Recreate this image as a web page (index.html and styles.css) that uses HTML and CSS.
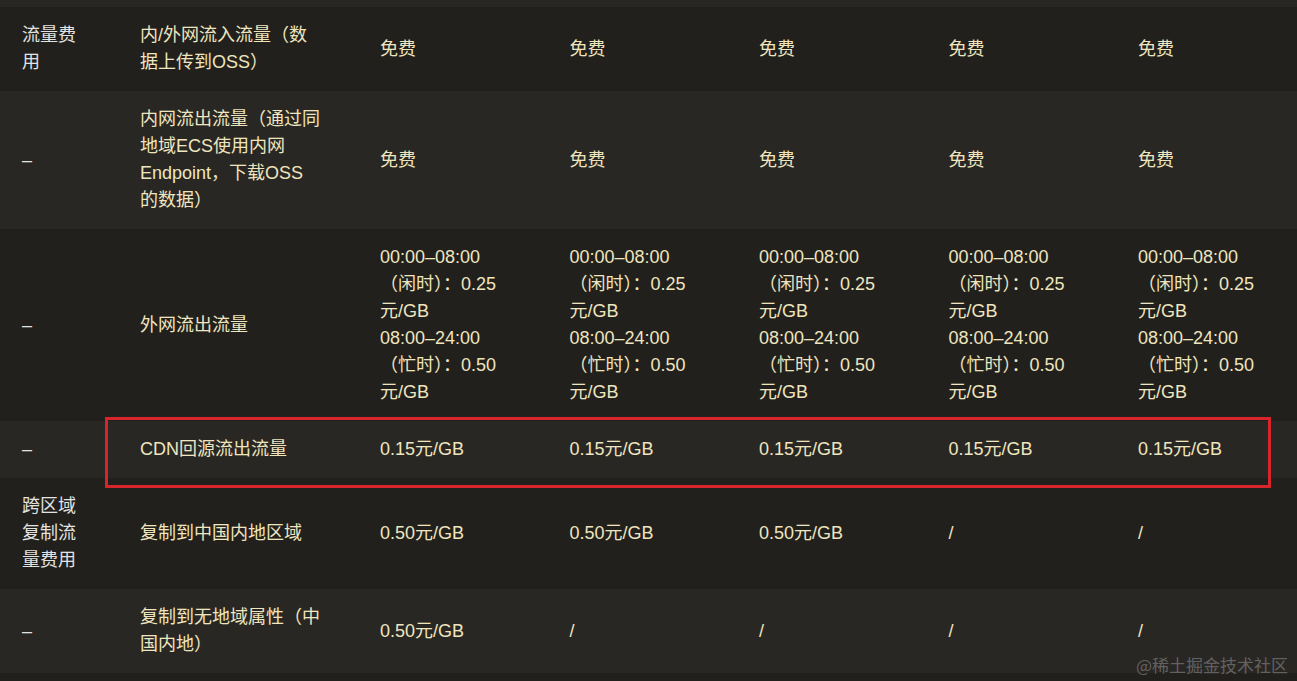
FILE: index.html
```html
<!DOCTYPE html>
<html>
<head>
    <meta charset="utf-8">
    <title>OSS 流量费用</title>
    <link rel="stylesheet" href="styles.css">
</head>
<body>
    <div class="page">
        <div class="peek"></div>
        <table class="price">
            <colgroup>
                <col class="w-type">
                <col class="w-item">
                <col class="w-val"><col class="w-val"><col class="w-val"><col class="w-val"><col class="w-val">
            </colgroup>
            <tbody>
                <tr class="dark">
                    <td class="type">流量费用</td>
                    <td class="item">内/外网流入流量（数据上传到OSS）</td>
                    <td>免费</td><td>免费</td><td>免费</td><td>免费</td><td>免费</td>
                </tr>
                <tr class="light">
                    <td class="type">–</td>
                    <td class="item">内网流出流量（通过同地域ECS使用内网Endpoint，下载OSS的数据）</td>
                    <td>免费</td><td>免费</td><td>免费</td><td>免费</td><td>免费</td>
                </tr>
                <tr class="dark">
                    <td class="type">–</td>
                    <td class="item">外网流出流量</td>
                    <td>00:00–08:00（闲时）：0.25元/GB<br>08:00–24:00（忙时）：0.50元/GB</td>
                    <td>00:00–08:00（闲时）：0.25元/GB<br>08:00–24:00（忙时）：0.50元/GB</td>
                    <td>00:00–08:00（闲时）：0.25元/GB<br>08:00–24:00（忙时）：0.50元/GB</td>
                    <td>00:00–08:00（闲时）：0.25元/GB<br>08:00–24:00（忙时）：0.50元/GB</td>
                    <td>00:00–08:00（闲时）：0.25元/GB<br>08:00–24:00（忙时）：0.50元/GB</td>
                </tr>
                <tr class="light">
                    <td class="type">–</td>
                    <td class="item">CDN回源流出流量</td>
                    <td>0.15元/GB</td><td>0.15元/GB</td><td>0.15元/GB</td><td>0.15元/GB</td><td>0.15元/GB</td>
                </tr>
                <tr class="dark">
                    <td class="type">跨区域复制流量费用</td>
                    <td class="item">复制到中国内地区域</td>
                    <td>0.50元/GB</td><td>0.50元/GB</td><td>0.50元/GB</td><td>/</td><td>/</td>
                </tr>
                <tr class="light">
                    <td class="type">–</td>
                    <td class="item">复制到无地域属性（中国内地）</td>
                    <td>0.50元/GB</td><td>/</td><td>/</td><td>/</td><td>/</td>
                </tr>
            </tbody>
        </table>
        <div class="mark"></div>
        <div class="watermark">@稀土掘金技术社区</div>
    </div>
</body>
</html>
```

FILE: styles.css
```css
html, body {
    margin: 0;
    height: 100%;
    overflow: hidden;
    background-color: #21201d;
}

.page {
    position: relative;
    height: 100%;
    font-family: "Liberation Sans", "Noto Sans CJK SC", sans-serif;
    font-size: 18px;
    line-height: 27px;
    color: #efe5bf;
}

.peek {
    height: 7px;
    background-color: #292724;
}

.price {
    table-layout: fixed;
    width: 1311.5px;
    border-collapse: collapse;
    border-spacing: 0;
}

.w-type { width: 124px; }
.w-item { width: 240px; }
.w-val  { width: 189.5px; }

.price td {
    padding: 15px 40px 15px 16px;
    vertical-align: middle;
    text-align: left;
}

.price td.type {
    padding-left: 22px;
    color: #e3e3e1;
}

.price td.item {
    padding-right: 43px;
}

.dark  { background-color: #21201d; }
.light { background-color: #292724; }

/* annotation box drawn over the CDN row */
.mark {
    position: absolute;
    left: 105px;
    top: 417px;
    width: 1166px;
    height: 71px;
    box-sizing: border-box;
    border: 3px solid #d7252b;
}

.watermark {
    position: absolute;
    right: 9px;
    bottom: 4px;
    font-family: "Noto Sans CJK SC", sans-serif;
    font-size: 17px;
    line-height: 24px;
    color: rgba(150, 150, 150, 0.55);
}
```
